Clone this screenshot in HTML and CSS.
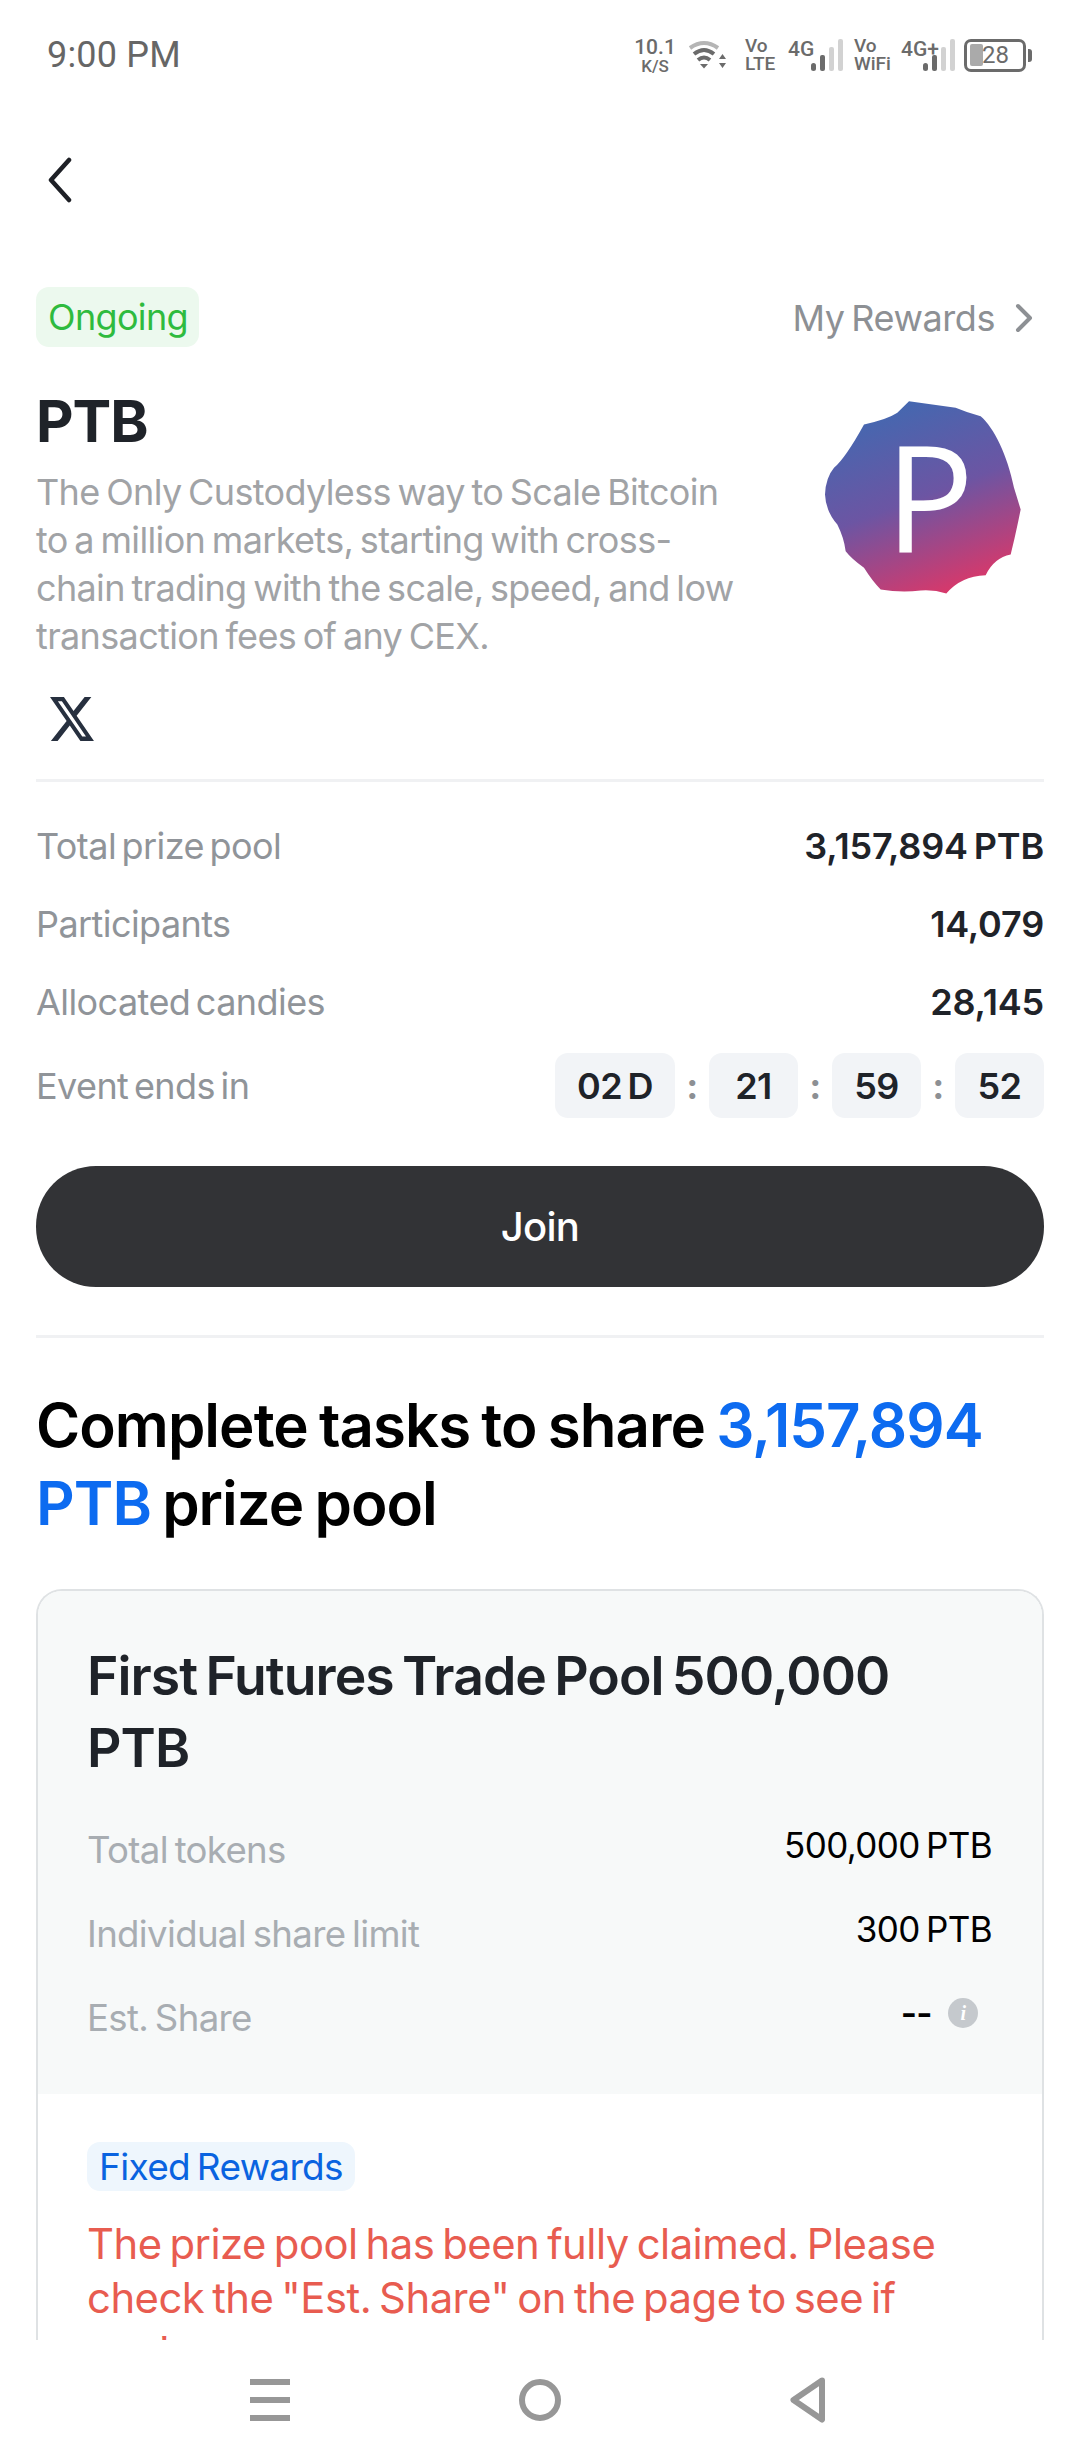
FILE: index.html
```html
<!DOCTYPE html>
<html lang="en">
<head>
<meta charset="utf-8">
<title>PTB</title>
<link rel="stylesheet" href="styles.css">
</head>
<body>
<div class="screen">
  <div class="scroll">
    <header class="status">
      <span class="clock">9:00 PM</span>
      <div class="status-icons">
        <div class="stack speed"><span class="s-top">10.1</span><span class="s-bot">K/S</span></div>
        <svg class="wifi" viewBox="0 0 40 30" width="40" height="30">
          <path d="M2 8 Q16 -2 30 8" fill="none" stroke="#b5b5b5" stroke-width="4"/>
          <path d="M6 14 Q16 6 26 14" fill="none" stroke="#6b6b6b" stroke-width="4"/>
          <path d="M10 20 Q16 15 22 20" fill="none" stroke="#6b6b6b" stroke-width="4"/>
          <path d="M12 24 H20 L16 28.500 Z" fill="#6b6b6b"/>
          <path d="M31 19 L34.500 14 L38 19 Z M31 23 H38 L34.500 28 Z" fill="#6b6b6b"/>
        </svg>
        <div class="stack vo vo-lte"><span class="s-mid">Vo</span><span class="s-mid">LTE</span></div>
        <div class="net net-4g"><span class="s-net">4G</span>
          <svg class="bars" viewBox="0 0 32 32" width="32" height="32"><rect x="0" y="24" width="5" height="8" rx="2.500" fill="#6b6b6b"/><rect x="9" y="16" width="5" height="16" rx="2" fill="#6b6b6b"/><rect x="18" y="8" width="5" height="24" rx="2" fill="#d2d2d2"/><rect x="27" y="0" width="5" height="32" rx="2" fill="#d2d2d2"/></svg>
        </div>
        <div class="stack vo vo-wifi"><span class="s-mid">Vo</span><span class="s-mid">WiFi</span></div>
        <div class="net net-plus"><span class="s-net">4G+</span>
          <svg class="bars" viewBox="0 0 32 32" width="32" height="32"><rect x="0" y="24" width="5" height="8" rx="2.500" fill="#6b6b6b"/><rect x="9" y="16" width="5" height="16" rx="2" fill="#6b6b6b"/><rect x="18" y="8" width="5" height="24" rx="2" fill="#d2d2d2"/><rect x="27" y="0" width="5" height="32" rx="2" fill="#d2d2d2"/></svg>
        </div>
        <div class="battery">
          <div class="batt-body"><i class="batt-fill"></i><span class="batt-num">28</span></div>
          <i class="batt-nub"></i>
        </div>
      </div>
    </header>

    <div class="backbar">
      <svg viewBox="0 0 28 46" width="28" height="46" fill="none"><path d="M23 3 L5 23 L23 43" stroke="#1e2026" stroke-width="4.500" stroke-linecap="round" stroke-linejoin="round"/></svg>
    </div>

    <main class="content">
      <div class="toprow">
        <span class="tag tag-green">Ongoing</span>
        <span class="rewards">My Rewards
          <svg viewBox="0 0 20 30" width="20" height="30" fill="none"><path d="M4 3 L16 15 L4 27" stroke="#8d9094" stroke-width="4" stroke-linecap="round" stroke-linejoin="round"/></svg>
        </span>
      </div>

      <section class="intro">
        <div class="intro-text">
          <h1 class="title">PTB</h1>
          <p class="desc">The Only Custodyless way to Scale Bitcoin to a million markets, starting with cross-chain trading with the scale, speed, and low transaction fees of any CEX.</p>
          <svg class="xicon" viewBox="1.25 2.25 21.6 19.5" width="44" height="44" preserveAspectRatio="none"><path fill="#27303f" d="M18.244 2.25h3.308l-7.227 8.26 8.502 11.24H16.17l-5.214-6.817L4.99 21.75H1.68l7.73-8.835L1.254 2.25H8.08l4.713 6.231zm-1.161 17.52h1.833L7.084 4.126H5.117z"/></svg>
        </div>
        <svg class="logo" viewBox="130 57 594 584" width="198" height="195">
          <defs>
            <linearGradient id="lg" x1="0.3" y1="0" x2="0.68" y2="1">
              <stop offset="0" stop-color="#4169b1"/>
              <stop offset="0.5" stop-color="#6c55a3"/>
              <stop offset="1" stop-color="#dc3768"/>
            </linearGradient>
          </defs>
          <path fill="url(#lg)" d="M385 60 L525 80 Q560 95 600 105 C640 140 680 220 700 320 L720 385 Q705 460 690 520 Q640 530 615 582 Q540 585 497 637 Q460 625 420 628 Q360 635 300 625 Q275 600 250 560 Q210 530 195 510 Q190 470 170 430 Q135 390 133 340 Q135 290 160 260 Q195 230 250 130 Q320 115 350 95 Z"/>
          <text class="logo-p" x="313" y="515">P</text>
        </svg>
      </section>

      <hr class="rule rule-first">

      <dl class="stats">
        <div class="stat"><dt>Total prize pool</dt><dd>3,157,894 PTB</dd></div>
        <div class="stat"><dt>Participants</dt><dd>14,079</dd></div>
        <div class="stat"><dt>Allocated candies</dt><dd>28,145</dd></div>
        <div class="stat stat-timer"><dt>Event ends in</dt>
          <dd class="timer">
            <span class="cell cell-day">02 D</span><span class="colon">:</span>
            <span class="cell">21</span><span class="colon">:</span>
            <span class="cell">59</span><span class="colon">:</span>
            <span class="cell">52</span>
          </dd>
        </div>
      </dl>

      <button class="join">Join</button>

      <hr class="rule">

      <h2 class="headline">Complete tasks to share <span class="accent">3,157,894 PTB</span> prize pool</h2>

      <article class="card">
        <div class="card-head">
          <h3 class="card-title">First Futures Trade Pool 500,000 PTB</h3>
          <div class="facts">
            <div class="fact"><span class="fact-label">Total tokens</span><span class="fact-value">500,000 PTB</span></div>
            <div class="fact"><span class="fact-label">Individual share limit</span><span class="fact-value">300 PTB</span></div>
            <div class="fact"><span class="fact-label">Est. Share</span><span class="fact-value fact-est">--<i class="info">i</i></span></div>
          </div>
        </div>
        <div class="card-body">
          <span class="tag tag-blue">Fixed Rewards</span>
          <p class="notice">The prize pool has been fully claimed. Please check the "Est. Share" on the page to see if you've</p>
        </div>
      </article>
    </main>
  </div>

  <nav class="navbar">
    <svg viewBox="0 0 40 42" width="40" height="42"><rect y="0" width="40" height="6" fill="#979797"/><rect y="18" width="40" height="6" fill="#979797"/><rect y="36" width="40" height="6" fill="#979797"/></svg>
    <svg viewBox="0 0 42 42" width="42" height="42" fill="none"><circle cx="21" cy="21" r="18" stroke="#979797" stroke-width="6"/></svg>
    <svg viewBox="0 0 36 46" width="36" height="46" fill="none"><path d="M32 3.500 L3.500 23 L32 42.500 Z" stroke="#979797" stroke-width="6" stroke-linejoin="round"/></svg>
  </nav>
</div>
</body>
</html>
```
FILE: styles.css
```css
* { box-sizing: border-box; }
html, body { margin: 0; padding: 0; background: #fff; }
body { font-family: Inter, "Liberation Sans", sans-serif; color: #1f2329; }
.screen { width: 1080px; height: 2460px; display: flex; flex-direction: column; overflow: hidden; }
.scroll { flex: 1; min-height: 0; overflow: hidden; }

/* status bar */
.status { height: 110px; display: flex; justify-content: space-between; align-items: flex-start; padding: 34px 48px 0 47px; font-family: Roboto, sans-serif; color: #6b6b6b; }
.clock { font-size: 36px; line-height: 42px; color: #666; letter-spacing: 0.2px; }
.status-icons { display: flex; align-items: center; height: 36px; margin-top: 3px; }
.stack { display: flex; flex-direction: column; align-items: center; font-weight: 500; }
.s-top { font-size: 21px; line-height: 20px; }
.s-bot { font-size: 17px; line-height: 16px; margin-top: 1px; }
.s-mid { font-size: 19px; line-height: 18px; white-space: nowrap; }
.speed { width: 36px; margin-right: 15px; }
.wifi { margin-right: 17px; flex: none; }
.vo { align-items: flex-start; }
.vo-lte { width: 29px; margin-right: 14px; }
.vo-wifi { width: 35px; margin-right: 12px; }
.net { display: flex; align-items: flex-start; height: 32px; }
.net-4g { margin-right: 11px; }
.net-plus { margin-right: 9px; }
.s-net { font-size: 21px; line-height: 20px; font-weight: 500; }
.net-4g .s-net { width: 25px; margin-right: -2px; }
.net-plus .s-net { width: 38px; margin-right: -16px; }
.bars { flex: none; }
.battery { display: flex; align-items: center; }
.batt-body { width: 62px; height: 33px; border: 3px solid #6b6b6b; border-radius: 7px; display: flex; align-items: center; padding-left: 3px; }
.batt-fill { width: 13px; height: 22px; background: #aaa; border-radius: 2px; flex: none; }
.batt-num { font-size: 24px; line-height: 24px; margin-left: -1px; font-weight: 400; }
.batt-nub { width: 4px; height: 13px; background: #6b6b6b; margin-left: 2px; border-radius: 0 3px 3px 0; }

.backbar { height: 140px; padding-left: 46px; display: flex; align-items: center; }

.content { padding: 37px 36px 0; }
.content * { letter-spacing: -0.018em; word-spacing: -0.08em; }

.toprow { display: flex; justify-content: space-between; align-items: center; height: 60px; }
.tag { display: inline-flex; align-items: center; border-radius: 13px; }
.tag-green { height: 60px; padding: 0 11px 0 12px; background: #ecf9ee; color: #2fbb3e; font-size: 36px; }
.rewards { display: flex; align-items: center; gap: 19px; font-size: 36px; color: #8d9094; padding-right: 10px; margin-top: 2px; }
.content .rewards { letter-spacing: -0.012em; }

.intro { display: flex; justify-content: space-between; align-items: flex-start; margin-top: 40px; }
.intro-text { width: 720px; }
.title { margin: 0; font-size: 58px; line-height: 68px; font-weight: 700; color: #1f2329; }
.desc { margin: 13px 0 0; font-size: 36px; line-height: 48px; color: #a1a3a6; }
.xicon { display: block; margin: 37px 0 0 14px; }
.logo { margin: 13px 22px 0 0; flex: none; }
.logo-p { font-family: "Open Sans", sans-serif; font-size: 444px; font-weight: 500; fill: #fff; }

.rule { border: 0; height: 3px; background: #f0f1f3; margin: 48px 0 0; }
.rule-first { margin-top: 38px; }

.stats { margin: 40px 0 0; display: flex; flex-direction: column; gap: 30px; }
.stat { display: flex; justify-content: space-between; align-items: center; height: 48px; }
.stat dt { font-size: 36px; color: #909499; }
.content .stat dt { letter-spacing: -0.016em; word-spacing: -0.11em; }
.stat dd { margin: 0; font-size: 36px; font-weight: 600; color: #1f2329; }
.content .stat dd { letter-spacing: -0.005em; }
.stat-timer { height: 65px; margin-top: -3px; }
.timer { display: flex; align-items: center; }
.cell { height: 65px; min-width: 89px; padding: 0 10px; background: #f2f4f7; border-radius: 13px; display: flex; align-items: center; justify-content: center; white-space: nowrap; }
.cell-day { width: 120px; }
.colon { width: 34px; text-align: center; color: #8d9094; font-weight: 700; }

.join { display: block; width: 100%; height: 121px; margin: 48px 0 0; border: 0; border-radius: 60px; background: #323336; color: #fff; font-family: inherit; font-size: 40px; font-weight: 500; }

.headline { margin: 48px 0 0; font-size: 60px; line-height: 78px; font-weight: 600; color: #000; }
.content .headline, .content .accent { word-spacing: -0.05em; letter-spacing: -0.016em; }
.accent { color: #0d6bf0; }

.card { margin-top: 47px; border: 2px solid #dfe2e4; border-bottom: 0; border-radius: 26px 26px 0 0; overflow: hidden; }
.card-head { background: #f7f9f9; padding: 49px 50px 54px 49px; }
.card-title { margin: 0; max-width: 860px; font-size: 53.500px; line-height: 72px; font-weight: 600; color: #1f2329; }
.facts { margin-top: 44px; display: flex; flex-direction: column; gap: 40px; }
.fact { display: flex; justify-content: space-between; align-items: flex-start; height: 44px; }
.fact-label { font-size: 36.600px; line-height: 44px; color: #a8adb2; }
.fact-value { font-size: 35px; line-height: 34px; color: #000; }
.fact-est { display: flex; align-items: center; gap: 16px; padding-right: 14px; font-weight: 600; }
.info { width: 30px; height: 30px; border-radius: 50%; background: #c5c9cd; color: #fff; font: italic 700 20px/30px "Liberation Serif", serif; text-align: center; }

.card-body { padding: 48px 50px 0 49px; background: #fff; }
.tag-blue { height: 49px; padding: 0 12px; background: #eef6fd; color: #0a63e0; font-size: 37px; }
.notice { margin: 26px 0 0; font-size: 41.800px; line-height: 54px; color: #e85c50; }
.content .notice { letter-spacing: -0.012em; }

.navbar { flex: none; height: 120px; background: #fff; display: flex; justify-content: space-between; align-items: center; padding: 0 254px 0 250px; }
```
